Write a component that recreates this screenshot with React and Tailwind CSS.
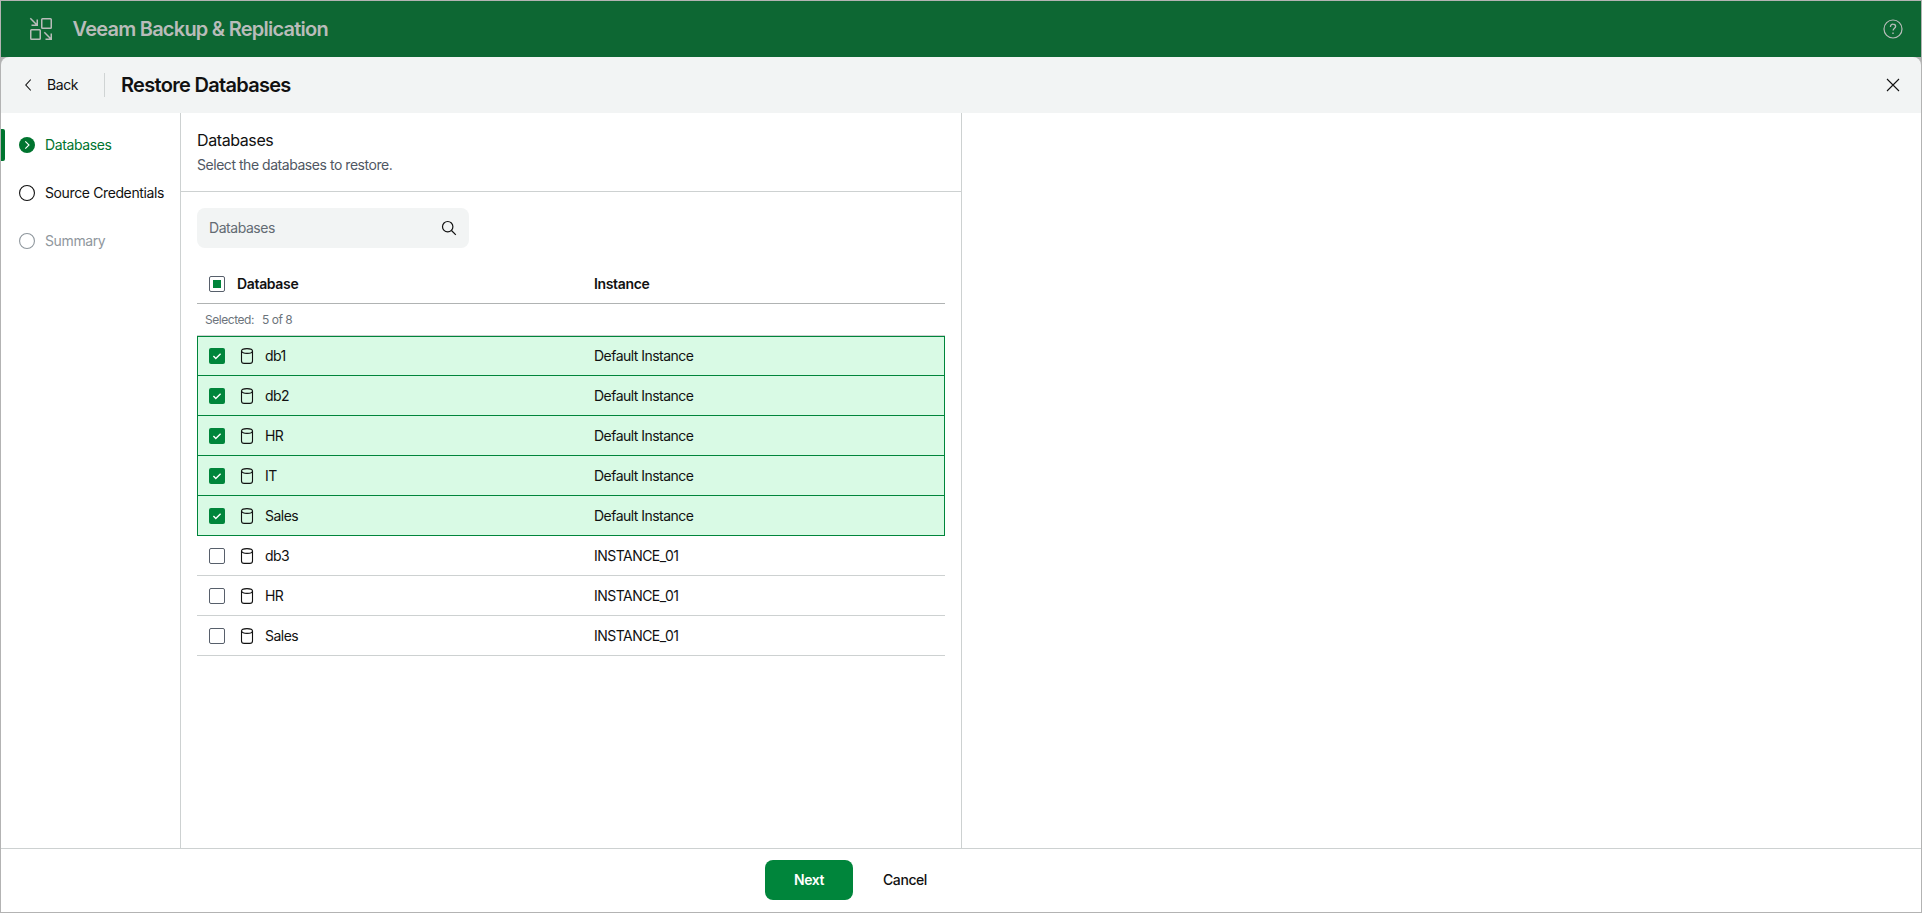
import React from 'react';
import clsx from 'clsx';

const steps = [
  { label: 'Databases', state: 'active' },
  { label: 'Source Credentials', state: 'next' },
  { label: 'Summary', state: 'disabled' },
];

const databases = [
  { id: 1, name: 'db1', instance: 'Default Instance', selected: true },
  { id: 2, name: 'db2', instance: 'Default Instance', selected: true },
  { id: 3, name: 'HR', instance: 'Default Instance', selected: true },
  { id: 4, name: 'IT', instance: 'Default Instance', selected: true },
  { id: 5, name: 'Sales', instance: 'Default Instance', selected: true },
  { id: 6, name: 'db3', instance: 'INSTANCE_01', selected: false },
  { id: 7, name: 'HR', instance: 'INSTANCE_01', selected: false },
  { id: 8, name: 'Sales', instance: 'INSTANCE_01', selected: false },
];

const LogoIcon = () => (
  <svg width="24" height="24" viewBox="0 0 24 24" fill="none" stroke="currentColor" strokeWidth="1.5">
    <rect x="12.75" y="1.75" width="9.5" height="9.5" rx="0.8" />
    <rect x="1.75" y="12.75" width="9.5" height="9.5" rx="0.8" />
    <path d="M1.3 1.3l6.9 6.9M8.25 2.5v5.75H2.5M15.3 15.3l6.9 6.9M22.25 16.5v5.75H16.5" />
  </svg>
);

const HelpIcon = () => (
  <svg width="20" height="20" viewBox="0 0 20 20" fill="none" stroke="currentColor">
    <circle cx="10" cy="10" r="9" strokeWidth="1.2" />
    <path d="M7.5 8V7.4A2.3 2.3 0 0 1 10 5.2c1.5 0 2.6.9 2.6 2.2 0 1.8-2.5 2-2.5 4.2" strokeWidth="1.3" />
    <path d="M10 13.4v1.5" strokeWidth="1.4" />
  </svg>
);

const DatabaseIcon = () => (
  <svg width="14" height="16" viewBox="0 0 14 16" fill="none" stroke="#111" strokeWidth="1.1">
    <ellipse cx="7" cy="3" rx="5.5" ry="2.4" />
    <path d="M1.5 3v10c0 1.4 1.2 2.4 2.7 2.4h5.6c1.5 0 2.7-1 2.7-2.4V3" />
  </svg>
);

const SearchIcon = () => (
  <svg width="16" height="16" viewBox="0 0 16 16" fill="none" stroke="#111" strokeWidth="1.2">
    <circle cx="6.7" cy="6.7" r="5.2" />
    <path d="M10.5 10.5l4.3 4.3" />
  </svg>
);

const StepIcon = ({ state }) => {
  if (state === 'active') {
    return (
      <svg width="16" height="16" viewBox="0 0 16 16" fill="none">
        <circle cx="8" cy="8" r="8" fill="#00742f" />
        <path d="M6.3 4.3L10 8l-3.7 3.7" stroke="#fff" strokeWidth="1.1" />
      </svg>
    );
  }
  return (
    <svg width="16" height="16" viewBox="0 0 16 16" fill="none" stroke="currentColor">
      <circle cx="8" cy="8" r="7.45" strokeWidth="1.1" />
    </svg>
  );
};

const Checkbox = ({ checked, indeterminate }) => (
  <span
    className={clsx(
      'flex size-4 shrink-0 items-center justify-center rounded-xs',
      checked ? 'bg-[#00853b]' : 'border border-[#575f6b] bg-white'
    )}
  >
    {checked && (
      <svg width="16" height="16" viewBox="0 0 16 16" fill="none" stroke="#fff" strokeWidth="1.4">
        <path d="M4.4 8l2.4 2.4 4.8-4.7" />
      </svg>
    )}
    {indeterminate && <span className="size-2 bg-[#00853b]" />}
  </span>
);

export default function App() {
  const selectedCount = databases.filter((db) => db.selected).length;

  return (
    <div className="flex h-[913px] w-[1922px] flex-col border border-[#b3b3b3] bg-white font-[Inter,sans-serif] text-sm tracking-[-0.42px] text-[#111]">
      <header className="flex h-14 shrink-0 items-center bg-[#0d6733] pr-[18px] pl-7 text-[#b9bcba]">
        <LogoIcon />
        <span className="ml-[19.5px] text-xl leading-6 font-semibold tracking-[-0.76px]">Veeam Backup &amp; Replication</span>
        <div className="ml-auto">
          <HelpIcon />
        </div>
      </header>

      <div className="shrink-0 bg-[#b3b3b3]">
        <div className="flex h-14 items-center rounded-t-lg bg-[#f2f4f4] pr-[21px] pl-6">
          <button className="flex items-center gap-4">
            <svg width="6" height="12" viewBox="0 0 6 12" fill="none" stroke="#111" strokeWidth="1.1">
              <path d="M5.8.5L.8 6l5 5.5" />
            </svg>
            <span className="w-8 text-left">Back</span>
          </button>
          <div className="ml-[25px] h-6 w-px bg-[#d0d4d4]" />
          <h1 className="ml-4 text-xl leading-6 font-semibold tracking-[-0.7px]">Restore Databases</h1>
          <button className="ml-auto">
            <svg width="14" height="14" viewBox="0 0 14 14" fill="none" stroke="#111" strokeWidth="1.1">
              <path d="M1 1l12 12M13 1L1 13" />
            </svg>
          </button>
        </div>
      </div>

      <main className="flex min-h-0 flex-1">
        <nav className="flex w-[180px] shrink-0 flex-col gap-4 border-r border-[#cdd1d1] pt-4">
          {steps.map((step) => (
            <div
              key={step.label}
              className={clsx(
                'flex h-8 items-center tracking-[-0.38px] whitespace-nowrap',
                step.state === 'active' && 'text-[#00742f]',
                step.state === 'disabled' && 'text-[#8f979d]'
              )}
            >
              <span className={clsx('h-8 w-1 rounded-r-xs', step.state === 'active' && 'bg-[#00742f]')} />
              <span className="mr-2.5 ml-3.5">
                <StepIcon state={step.state} />
              </span>
              {step.label}
            </div>
          ))}
        </nav>

        <section className="flex w-[781px] shrink-0 flex-col border-r border-[#cdd1d1]">
          <div className="h-[79px] border-b border-[#cdd1d1] px-4 pt-[15px]">
            <h2 className="text-base leading-6 tracking-[-0.4px]">Databases</h2>
            <p className="mt-px leading-6 tracking-[-0.46px] text-[#4f5763]">Select the databases to restore.</p>
          </div>

          <div className="flex flex-col p-4">
            <div className="flex h-10 w-[272px] items-center justify-between rounded-lg bg-[#f2f4f4] px-3 tracking-[-0.46px] text-[#636b73]">
              <span>Databases</span>
              <SearchIcon />
            </div>

            <div className="mt-4 flex h-10 items-center border-b border-[#b0b3b3] pl-3 font-semibold tracking-[-0.34px]">
              <Checkbox indeterminate />
              <span className="ml-3 w-[357px]">Database</span>
              <span>Instance</span>
            </div>
            <div className="flex h-8 items-center gap-2 border-b border-[#cdd1d1] pl-2 text-xs tracking-[-0.46px] text-[#6c747b]">
              <span>Selected:</span>
              <span>
                {selectedCount} of {databases.length}
              </span>
            </div>

            {databases.map((db, i) => (
              <div
                key={db.id}
                className={clsx(
                  'flex h-10 items-center border-b tracking-[-0.53px]',
                  db.selected ? 'border-x border-[#00853b] bg-[#d9fae5] pl-[11px]' : 'border-[#cdd1d1] pl-3',
                  i === 0 && 'border-t'
                )}
              >
                <Checkbox checked={db.selected} />
                <span className="ml-[15px]">
                  <DatabaseIcon />
                </span>
                <span className="ml-[11px] w-[329px]">{db.name}</span>
                <span>{db.instance}</span>
              </div>
            ))}
          </div>
        </section>
      </main>

      <footer className="flex h-16 shrink-0 justify-center border-t border-[#cdd1d1] pt-[11px]">
        <div className="flex w-[392px]">
          <button className="h-10 w-22 rounded-lg bg-[#00853b] font-semibold text-white">Next</button>
          <button className="h-10 px-[30px] font-medium">Cancel</button>
        </div>
      </footer>
    </div>
  );
}
